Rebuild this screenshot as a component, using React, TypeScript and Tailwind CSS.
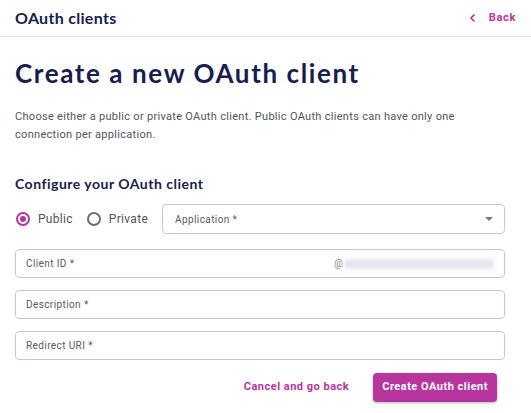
import React from "react";

const heading = { fontFamily: "Lato, 'Open Sans', sans-serif" };

function Field({ label, children }: { label: string; children?: React.ReactNode }) {
  return (
    <div className="flex h-[29px] items-center justify-between rounded-[4px] border border-[#c3c8de] pl-[10px] pr-[10px]">
      <span className="text-[10px] tracking-[0.4px] text-[#555a66]">{label}</span>
      {children}
    </div>
  );
}

export default function App() {
  return (
    <div className="h-[413px] w-[531px] bg-white text-[#1b2550]" style={{ fontFamily: "Roboto, 'Liberation Sans', sans-serif" }}>
      <div className="flex h-[37px] items-center justify-between border-b border-[#e2e2e2] pl-[15px] pr-[15px]">
        <h1 className="text-[16px] font-bold tracking-[0.3px] text-[#15204d]" style={heading}>OAuth clients</h1>
        <div className="flex items-center gap-[12px] text-[#b8349f]">
          <svg width="8" height="10" viewBox="0 0 8 10" fill="none">
            <path d="M5.5 1.5 L2 5 L5.5 8.5" stroke="#b8349f" strokeWidth="1.6" />
          </svg>
          <span className="text-[11px] font-bold tracking-[0.7px]">Back</span>
        </div>
      </div>
      <div className="pl-[15px] pr-[26px]">
        <h2 className="mt-[20px] text-[26px] font-bold leading-[32px] tracking-[1.6px] text-[#15204d]" style={heading}>
          Create a new OAuth client
        </h2>
        <p className="mt-[19px] max-w-[485px] text-[11px] leading-[18px] tracking-[0.3px] text-[#50545e]">
          Choose either a public or private OAuth client. Public OAuth clients can have only one connection per application.
        </p>
        <h3 className="mt-[31px] text-[14px] font-bold leading-[18px] tracking-[0.5px] text-[#15204d]" style={heading}>
          Configure your OAuth client
        </h3>
        <div className="mt-[11px] flex items-center">
          <div className="flex items-center gap-[8px] pl-[1px]">
            <span className="flex h-[14px] w-[14px] items-center justify-center rounded-full border-2 border-[#b8349f]">
              <span className="h-[6px] w-[6px] rounded-full bg-[#b8349f]" />
            </span>
            <span className="text-[12px] tracking-[0.3px] text-[#50545e]">Public</span>
          </div>
          <div className="ml-[14px] flex items-center gap-[8px]">
            <span className="h-[14px] w-[14px] rounded-full border-2 border-[#6b6e75]" />
            <span className="text-[12px] tracking-[0.3px] text-[#50545e]">Private</span>
          </div>
          <div className="ml-[14px] flex h-[30px] flex-1 items-center justify-between rounded-[4px] border border-[#c3c8de] pl-[12px] pr-[10px]">
            <span className="text-[10px] tracking-[0.4px] text-[#555a66]">Application *</span>
            <svg width="10" height="6" viewBox="0 0 10 6">
              <path d="M1 1 L9 1 L5 5 Z" fill="#777" />
            </svg>
          </div>
        </div>
        <div className="mt-[15px] flex flex-col gap-[12px]">
          <Field label="Client ID *">
            <span className="flex items-center text-[10px] text-[#888]">
              @
              <span className="ml-[1px] h-[10px] w-[150px] rounded bg-[#e4e6ea] blur-[2px]" />
            </span>
          </Field>
          <Field label="Description *" />
          <Field label="Redirect URI *" />
        </div>
        <div className="mt-[13px] flex items-center justify-end gap-[24px] pr-[8px]">
          <button className="text-[11px] font-bold tracking-[0.5px] text-[#b8349f]">Cancel and go back</button>
          <button className="h-[29px] rounded-[4px] bg-[#b8349f] px-[9px] text-[11px] font-bold tracking-[0.5px] text-white shadow-[0_1px_3px_rgba(0,0,0,0.3)]">
            Create OAuth client
          </button>
        </div>
      </div>
    </div>
  );
}
